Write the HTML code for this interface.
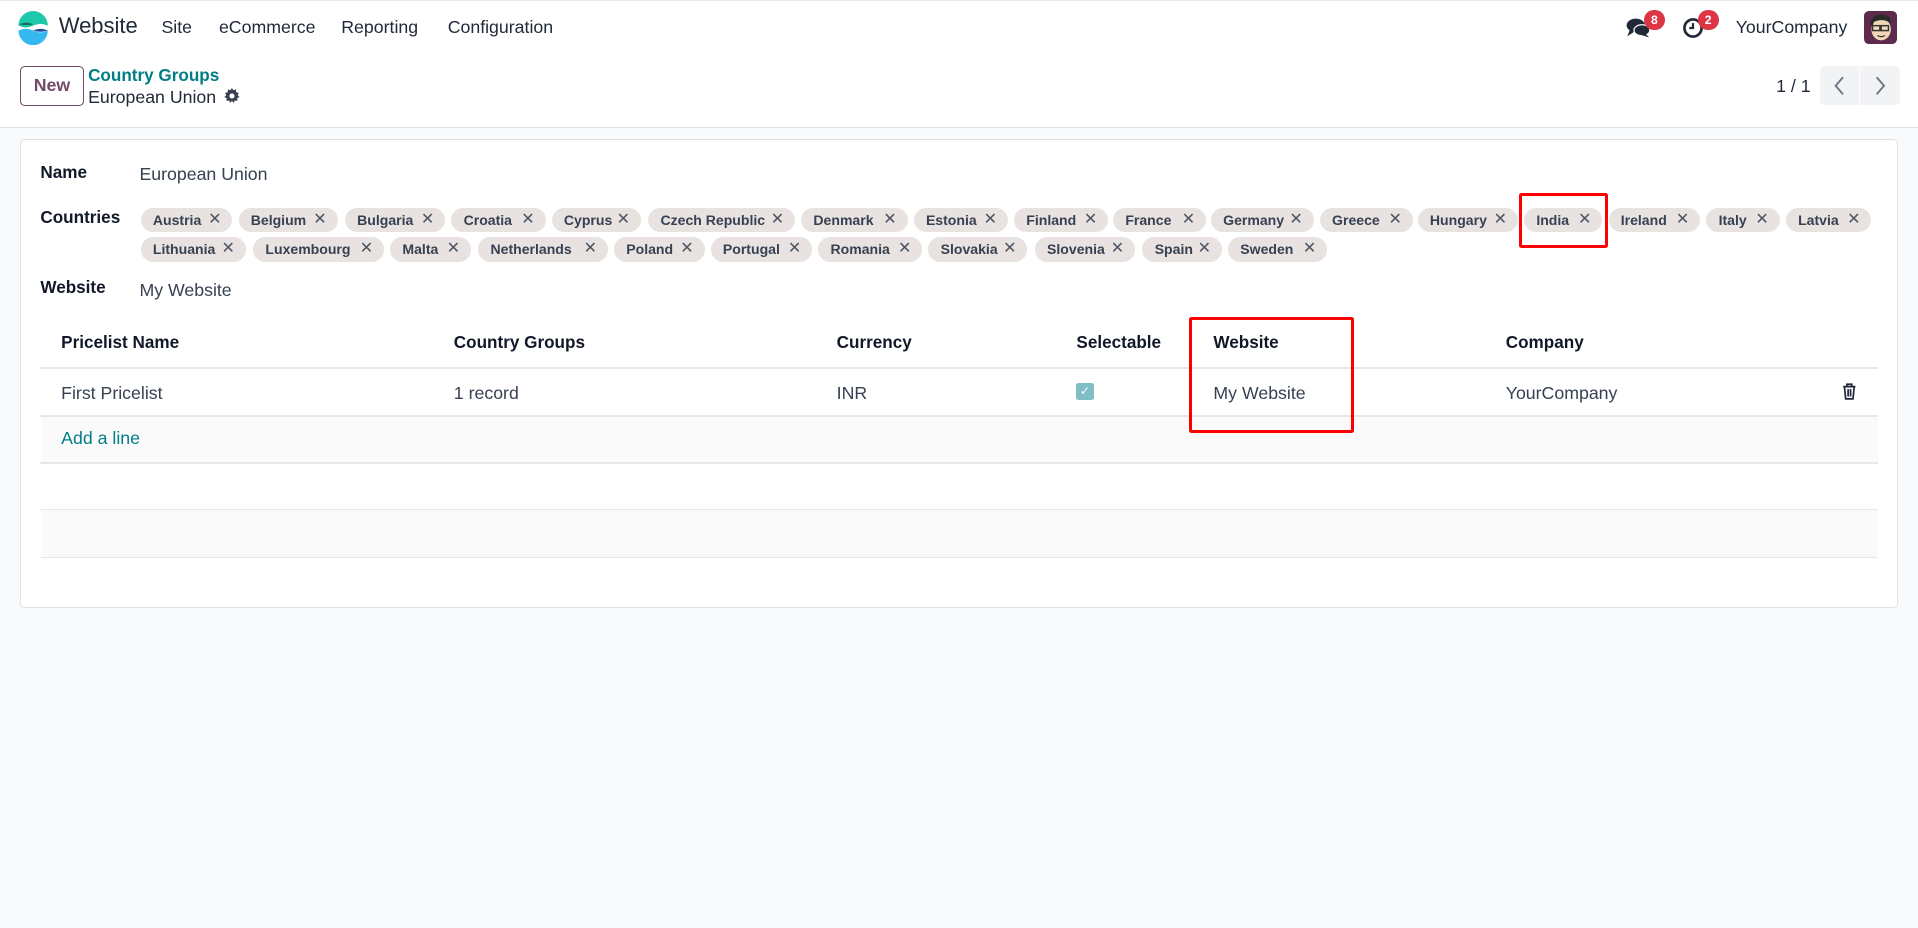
<!DOCTYPE html>
<html><head><meta charset="utf-8">
<style>
*{box-sizing:border-box;margin:0;padding:0}
html,body{width:1918px;height:928px;overflow:hidden;background:#f9fafb}
#root{zoom:1.2232;width:1568px;height:759px;position:relative;font-family:"Liberation Sans",sans-serif;color:#374151;font-size:13.5px}
.a{position:absolute;white-space:nowrap}
.nav{position:absolute;left:0;top:0;width:1568px;height:43px;background:#fff;border-top:1px solid #e5e7eb}
.cp{position:absolute;left:0;top:43px;width:1568px;height:62px;background:#fff;border-bottom:1px solid #dee2e6}
.card{position:absolute;left:16px;top:114px;width:1536px;height:383px;background:#fff;border:1px solid #dee2e6;border-radius:4px}
.lbl{font-weight:bold;color:#111827;font-size:14px}
.tag{position:absolute;height:20px;border-radius:10px;background:#e8e2e1;color:#374151;font-size:11.5px;font-weight:bold;line-height:20px;padding-left:10px}
.tag span{position:absolute;right:9px;top:0;font-weight:normal;font-size:13px;color:#4b5563}
.th{font-weight:bold;color:#111827;font-size:14px}
.hl{position:absolute;left:33px;width:1502px;height:1px;background:#e5e7eb}
.red{position:absolute;border:3px solid #f00;border-radius:2px}
.badge{position:absolute;width:17px;height:17px;border-radius:50%;background:#dc3545;color:#fff;font-size:10px;font-weight:bold;text-align:center;line-height:17px}
</style></head><body><div id="root">
<div class="nav">
 <svg class="a" style="left:13px;top:8px" width="28" height="28" viewBox="0 0 28 28">
  <path d="M2 12 A12 12 0 0 1 26 12 Q20 9 14 12 Q8 15 2 12Z" fill="#1ec9ab"/>
  <path d="M3 11 Q8 8 14 11 Q9 12 3 11Z" fill="#1b6b5b"/>
  <path d="M2 16 Q8 13 14 16 Q20 19 26 16 A12 12 0 0 1 2 16Z" fill="#35b8f0"/>
  <path d="M14 16 Q20 13 26 16 Q20 18 14 16Z" fill="#1d4f9a"/>
 </svg>
 <div class="a" style="left:48px;top:10px;font-size:18px;color:#1f2937">Website</div>
 <div class="a" style="left:132px;top:13px;font-size:14.5px;color:#1f2937">Site</div>
 <div class="a" style="left:179px;top:13px;font-size:14.5px;color:#1f2937">eCommerce</div>
 <div class="a" style="left:279px;top:13px;font-size:14.5px;color:#1f2937">Reporting</div>
 <div class="a" style="left:366px;top:13px;font-size:14.5px;color:#1f2937">Configuration</div>
 <svg class="a" style="left:1329px;top:14px" width="20" height="17" viewBox="0 0 20 17"><ellipse cx="8" cy="6" rx="7.5" ry="5.5" fill="#1f2937"/><path d="M3 10 L1 15 L7 11Z" fill="#1f2937"/><ellipse cx="13" cy="10" rx="6.5" ry="4.5" fill="#1f2937" stroke="#fff" stroke-width="1"/><path d="M16 13 L19 16 L13 14Z" fill="#1f2937"/></svg>
 <div class="badge" style="left:1344px;top:7px">8</div>
 <svg class="a" style="left:1375px;top:13px" width="18" height="18" viewBox="0 0 18 18"><circle cx="9" cy="9" r="7" fill="none" stroke="#1f2937" stroke-width="2.2"/><path d="M9 5 V9 H6" fill="none" stroke="#1f2937" stroke-width="1.8"/></svg>
 <div class="badge" style="left:1388px;top:7px">2</div>
 <div class="a" style="left:1419px;top:13px;font-size:14.5px;color:#1f2937">YourCompany</div>
 <svg class="a" style="left:1524px;top:8px" width="27" height="27" viewBox="0 0 27 27"><rect width="27" height="27" rx="4" fill="#5e2a4c"/><ellipse cx="14" cy="15" rx="8" ry="9" fill="#f1d7b8"/><path d="M5 10 Q8 2 15 3 Q22 3 22 10 L20 9 Q15 6 8 9 L7 13Z" fill="#2a2a2a"/><rect x="7" y="12" width="6" height="4" fill="none" stroke="#333" stroke-width="1.2"/><rect x="14" y="12" width="6" height="4" fill="none" stroke="#333" stroke-width="1.2"/><path d="M11 20 Q14 22 17 20" stroke="#333" fill="none"/></svg>
</div>
<div class="cp">
 <div class="a" style="left:16px;top:11px;width:53px;height:33px;border:1px solid #714b67;border-radius:4px;color:#714b67;font-size:14.5px;font-weight:bold;text-align:center;line-height:31px">New</div>
 <div class="a" style="left:72px;top:11px;color:#017e84;font-size:14px;font-weight:bold">Country Groups</div>
 <div class="a" style="left:72px;top:28px;color:#1f2937;font-size:14.5px">European Union</div>
 <svg class="a" style="left:183px;top:29px" width="13" height="13" viewBox="0 0 16 16"><path fill="#374151" d="M8 0l1.4 2.2 2.5-.7.4 2.6 2.5.9-1 2.4L15.6 9l-2.3 1.3.2 2.6-2.6-.2L9.6 15 8 13l-1.6 2-1.3-2.3-2.6.2.2-2.6L.4 9l1.8-1.6-1-2.4 2.5-.9.4-2.6 2.5.7z"/><circle cx="8" cy="8" r="2.6" fill="#fff"/></svg>
 <div class="a" style="left:1452px;top:19px;font-size:14.5px;color:#1f2937">1 / 1</div>
 <div class="a" style="left:1488px;top:11px;width:32px;height:32px;background:#f1f3f5;border-radius:4px 0 0 4px"></div>
 <div class="a" style="left:1521px;top:11px;width:32px;height:32px;background:#f1f3f5;border-radius:0 4px 4px 0"></div>
 <svg class="a" style="left:1498px;top:19px" width="12" height="16" viewBox="0 0 12 16"><path d="M9 1 L3 8 L9 15" fill="none" stroke="#6b7280" stroke-width="1.5"/></svg>
 <svg class="a" style="left:1531px;top:19px" width="12" height="16" viewBox="0 0 12 16"><path d="M3 1 L9 8 L3 15" fill="none" stroke="#6b7280" stroke-width="1.5"/></svg>
</div>
<div class="card"></div>
<div class="a lbl" style="left:33px;top:133px">Name</div>
<div class="a" style="left:114px;top:134px;font-size:14.5px">European Union</div>
<div class="a lbl" style="left:33px;top:170px">Countries</div>
<div class="a lbl" style="left:33px;top:227px">Website</div>
<div class="a" style="left:114px;top:229px;font-size:14.5px">My Website</div>

<div class="tag" style="left:115px;top:170px;width:75px">Austria<span>✕</span></div>
<div class="tag" style="left:195px;top:170px;width:81px">Belgium<span>✕</span></div>
<div class="tag" style="left:282px;top:170px;width:82px">Bulgaria<span>✕</span></div>
<div class="tag" style="left:369px;top:170px;width:77px">Croatia<span>✕</span></div>
<div class="tag" style="left:451px;top:170px;width:73px">Cyprus<span>✕</span></div>
<div class="tag" style="left:530px;top:170px;width:120px">Czech Republic<span>✕</span></div>
<div class="tag" style="left:655px;top:170px;width:87px">Denmark<span>✕</span></div>
<div class="tag" style="left:747px;top:170px;width:77px">Estonia<span>✕</span></div>
<div class="tag" style="left:829px;top:170px;width:77px">Finland<span>✕</span></div>
<div class="tag" style="left:910px;top:170px;width:76px">France<span>✕</span></div>
<div class="tag" style="left:990px;top:170px;width:84px">Germany<span>✕</span></div>
<div class="tag" style="left:1079px;top:170px;width:76px">Greece<span>✕</span></div>
<div class="tag" style="left:1159px;top:170px;width:82px">Hungary<span>✕</span></div>
<div class="tag" style="left:1246px;top:170px;width:64px">India<span>✕</span></div>
<div class="tag" style="left:1315px;top:170px;width:75px">Ireland<span>✕</span></div>
<div class="tag" style="left:1395px;top:170px;width:60px">Italy<span>✕</span></div>
<div class="tag" style="left:1460px;top:170px;width:70px">Latvia<span>✕</span></div>
<div class="tag" style="left:115px;top:194px;width:86px">Lithuania<span>✕</span></div>
<div class="tag" style="left:207px;top:194px;width:107px">Luxembourg<span>✕</span></div>
<div class="tag" style="left:319px;top:194px;width:66px">Malta<span>✕</span></div>
<div class="tag" style="left:391px;top:194px;width:106px">Netherlands<span>✕</span></div>
<div class="tag" style="left:502px;top:194px;width:74px">Poland<span>✕</span></div>
<div class="tag" style="left:581px;top:194px;width:83px">Portugal<span>✕</span></div>
<div class="tag" style="left:669px;top:194px;width:85px">Romania<span>✕</span></div>
<div class="tag" style="left:759px;top:194px;width:81px">Slovakia<span>✕</span></div>
<div class="tag" style="left:846px;top:194px;width:82px">Slovenia<span>✕</span></div>
<div class="tag" style="left:934px;top:194px;width:65px">Spain<span>✕</span></div>
<div class="tag" style="left:1004px;top:194px;width:81px">Sweden<span>✕</span></div>

<div class="a th" style="left:50px;top:272px">Pricelist Name</div>
<div class="a th" style="left:371px;top:272px">Country Groups</div>
<div class="a th" style="left:684px;top:272px">Currency</div>
<div class="a th" style="left:880px;top:272px">Selectable</div>
<div class="a th" style="left:992px;top:272px">Website</div>
<div class="a th" style="left:1231px;top:272px">Company</div>
<div class="hl" style="top:300px;height:2px"></div>
<div class="a" style="left:50px;top:313px;font-size:14.5px">First Pricelist</div>
<div class="a" style="left:371px;top:313px;font-size:14.5px">1 record</div>
<div class="a" style="left:684px;top:313px;font-size:14.5px">INR</div>
<div class="a" style="left:880px;top:313px;width:14px;height:14px;background:#7fbfc3;border-radius:2px;color:#fff;font-size:10px;text-align:center;line-height:14px">✓</div>
<div class="a" style="left:992px;top:313px;font-size:14.5px">My Website</div>
<div class="a" style="left:1231px;top:313px;font-size:14.5px">YourCompany</div>
<svg class="a" style="left:1506px;top:313px" width="12" height="14" viewBox="0 0 12 14"><path d="M1 3 H11 M4 3 V1 H8 V3 M2 3 L3 13 H9 L10 3 M5 5 V11 M7 5 V11" fill="none" stroke="#1f2937" stroke-width="1.4"/></svg>
<div class="hl" style="top:339px;height:2px"></div>
<div class="a" style="left:34px;top:341px;width:1501px;height:37px;background:#fafafa"></div>
<div class="a" style="left:50px;top:350px;font-size:14.5px;color:#017e84">Add a line</div>
<div class="hl" style="top:378px"></div>
<div class="hl" style="top:416px"></div>
<div class="a" style="left:34px;top:417px;width:1501px;height:38px;background:#fafafa"></div>
<div class="hl" style="top:455px"></div>

<div class="red" style="left:1242px;top:158px;width:73px;height:45px"></div>
<div class="red" style="left:972px;top:259px;width:135px;height:95px"></div>
</div></body></html>
